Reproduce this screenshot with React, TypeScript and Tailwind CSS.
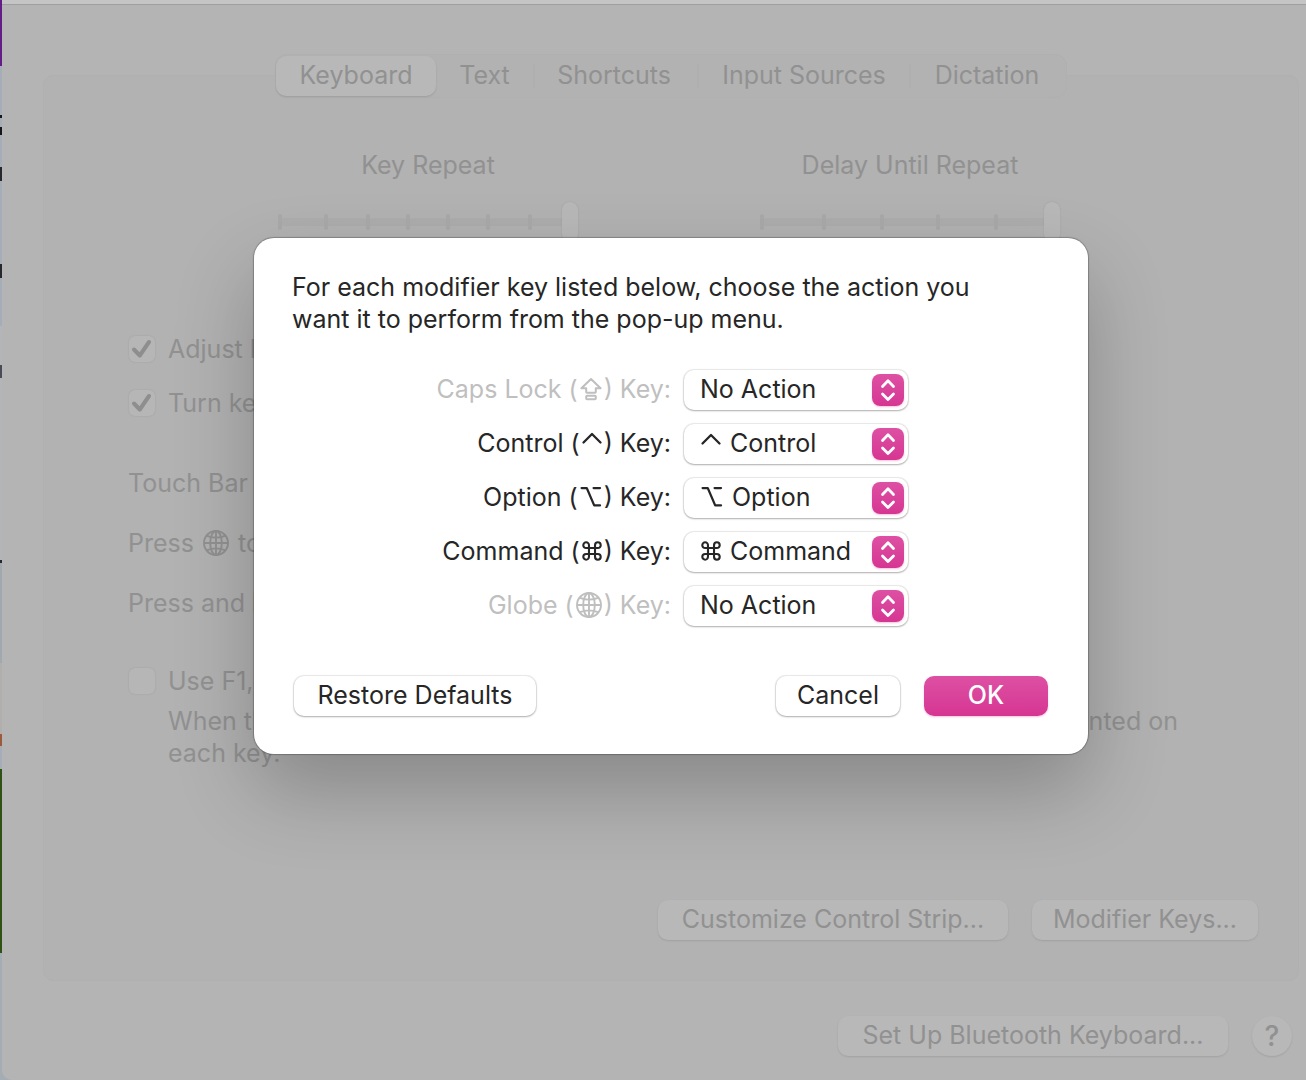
import React from "react";

type IconProps = { className?: string };

function CapsLockIcon({ className }: IconProps) {
  return (
    <svg viewBox="0 0 24 24" className={className} fill="none" stroke="currentColor" strokeWidth="2" strokeLinejoin="round" aria-hidden="true">
      <path d="M12 2 21.600 11.200h-4.800v3.800q0 .8-.8.8H8q-.8 0-.8-.8v-3.800H2.400Z" />
      <rect x="7.200" y="18.800" width="9.600" height="3.400" rx="1" />
    </svg>
  );
}

function ControlIcon({ className }: IconProps) {
  return (
    <svg viewBox="0 0 22 22" className={className} fill="none" stroke="currentColor" strokeWidth="2.300" strokeLinecap="round" strokeLinejoin="round" aria-hidden="true">
      <path d="M2.500 11.500 11 3l8.500 8.500" />
    </svg>
  );
}

function OptionIcon({ className }: IconProps) {
  return (
    <svg viewBox="0 0 24 24" className={className} fill="none" stroke="currentColor" strokeWidth="2.300" strokeLinecap="round" strokeLinejoin="round" aria-hidden="true">
      <path d="M2.600 3.100h5.200L15.200 20.400h5.800M14.600 3.100h6.400" />
    </svg>
  );
}

function CommandIcon({ className }: IconProps) {
  return (
    <svg viewBox="0 0 24 24" className={className} fill="none" stroke="currentColor" strokeWidth="2.300" aria-hidden="true">
      <path d="M8.700 5.600v12.800a3.100 3.100 0 1 1-3.100-3.100h12.800a3.100 3.100 0 1 1-3.100 3.100V5.600a3.100 3.100 0 1 1 3.100 3.100H5.600a3.100 3.100 0 1 1 3.100-3.100Z" />
    </svg>
  );
}

function GlobeIcon({ className }: IconProps) {
  return (
    <svg viewBox="0 0 26 26" className={className} fill="none" stroke="currentColor" strokeWidth="1.900" aria-hidden="true">
      <circle cx="13" cy="13" r="12" />
      <ellipse cx="13" cy="13" rx="5.800" ry="12" />
      <path d="M13 1v24M1 13h24M4 5.800q9 3.600 18 0M4 20.200q9-3.600 18 0" />
    </svg>
  );
}

function CheckIcon() {
  return (
    <svg viewBox="0 0 28 28" className="pointer-events-none absolute inset-0 size-7 text-[#8e8e8e]" fill="none" stroke="currentColor" strokeWidth="4" strokeLinecap="round" strokeLinejoin="round" aria-hidden="true">
      <path d="m6 14.500 5.800 6L21 7" />
    </svg>
  );
}

const edge: [string, string][] = [
  ["h-[66px]", "bg-[#641c86]"],
  ["h-[49px]", "bg-[#a4adb8]"],
  ["h-[3px]", "bg-[#15171a]"],
  ["h-[9px]", "bg-[#a4adb8]"],
  ["h-[8px]", "bg-[#15171a]"],
  ["h-[32px]", "bg-[#a4adb8]"],
  ["h-[14px]", "bg-[#26282c]"],
  ["h-[83px]", "bg-[#a4adb8]"],
  ["h-[14px]", "bg-[#26282c]"],
  ["h-[48px]", "bg-[#a4adb8]"],
  ["h-[39px]", "bg-[#b4b5b8]"],
  ["h-[13px]", "bg-[#474c55]"],
  ["h-[182px]", "bg-[#b4b5b8]"],
  ["h-[3px]", "bg-[#26282c]"],
  ["h-[100px]", "bg-[#a0a8b0]"],
  ["h-[71px]", "bg-[#b1aeac]"],
  ["h-[12px]", "bg-[#9c5a3c]"],
  ["h-[23px]", "bg-[#a4adb8]"],
  ["h-[184px]", "bg-[#2f5214]"],
  ["flex-1", "bg-[#a5adb4]"],
];

const tabs = [
  { label: "Text", width: "w-[97px]" },
  { label: "Shortcuts", width: "w-[164px] pr-1" },
  { label: "Input Sources", width: "w-[212px]" },
  { label: "Dictation", width: "w-[154px]" },
];

function TickSlider({ id, label, columns, ticks, max }: { id: string; label: string; columns: string; ticks: number; max: number }) {
  return (
    <div className="flex w-[300px] flex-col items-center">
      <label htmlFor={id} className="whitespace-nowrap">{label}</label>
      <div className="relative mt-[21px] h-10 w-full">
        <div className="absolute inset-x-0.5 top-4 h-2 rounded bg-[#adadad]" />
        <div className={`absolute inset-x-0 top-3 grid h-4 ${columns}`}>
          {Array.from({ length: ticks }, (_, i) => (
            <span key={i} className="h-4 w-1 rounded-full bg-[#a9a9a9]" />
          ))}
        </div>
        <input
          id={id}
          type="range"
          min={0}
          max={max}
          defaultValue={max}
          className="absolute inset-0 h-10 w-full appearance-none bg-transparent [&::-webkit-slider-thumb]:h-10 [&::-webkit-slider-thumb]:w-4 [&::-webkit-slider-thumb]:appearance-none [&::-webkit-slider-thumb]:rounded-full [&::-webkit-slider-thumb]:bg-[#b8b8b8] [&::-webkit-slider-thumb]:shadow-[0_0_2px_rgba(0,0,0,0.1)]"
        />
      </div>
    </div>
  );
}

function CheckRow({ id, label, checked }: { id: string; label: string; checked?: boolean }) {
  return (
    <div className="flex h-8 items-center gap-3">
      <span className="relative flex size-7 shrink-0 items-center justify-center">
        <input id={id} type="checkbox" defaultChecked={checked} className="block size-[26px] appearance-none rounded-md bg-[#b6b6b6] shadow-[0_0_2px_rgba(0,0,0,0.12)]" />
        {checked && <CheckIcon />}
      </span>
      <label htmlFor={id} className="whitespace-nowrap">{label}</label>
    </div>
  );
}

const dimButton = "h-10 whitespace-nowrap rounded-[10px] bg-[#b8b8b8] pb-0.5 text-center shadow-[0_1px_2px_rgba(0,0,0,0.1)]";
const lightControl = "h-10 whitespace-nowrap rounded-[10px] bg-white pb-0.5 shadow-[0_0_1px_1px_rgba(0,0,0,0.09),0_1px_2px_rgba(0,0,0,0.25)]";

type Modifier = {
  id: string;
  name: string;
  icon: React.ReactNode;
  dim?: boolean;
  value: string;
  valueIcon?: React.ReactNode;
  pad: string;
};

const modifiers: Modifier[] = [
  { id: "caps", name: "Caps Lock", icon: <CapsLockIcon className="mx-px inline size-6 align-[-3px]" />, dim: true, value: "No Action", pad: "pl-4" },
  { id: "control", name: "Control", icon: <ControlIcon className="mx-px inline size-[22px] align-[-1px]" />, value: "Control", valueIcon: <ControlIcon className="size-[22px]" />, pad: "pl-[46px]" },
  { id: "option", name: "Option", icon: <OptionIcon className="mx-px inline size-6 align-[-3px]" />, value: "Option", valueIcon: <OptionIcon className="size-6" />, pad: "pl-12" },
  { id: "command", name: "Command", icon: <CommandIcon className="mx-px inline size-[22px] align-[-2px]" />, value: "Command", valueIcon: <CommandIcon className="size-[22px]" />, pad: "pl-[46px]" },
  { id: "globe", name: "Globe", icon: <GlobeIcon className="mx-0.5 inline size-[26px] align-[-4px]" />, dim: true, value: "No Action", pad: "pl-4" },
];

function ModifierRow({ m }: { m: Modifier }) {
  return (
    <div className="flex h-10 items-center">
      <label htmlFor={m.id} className={`w-1/2 whitespace-nowrap pb-0.5 text-right ${m.dim ? "text-[#bfbfbf]" : ""}`}>
        {m.name} ({m.icon}) Key:
      </label>
      <div className="relative ml-[13px] w-[224px]">
        <select id={m.id} defaultValue={m.value} className={`block w-full appearance-none text-left ${lightControl} ${m.pad}`}>
          <option>{m.value}</option>
        </select>
        {m.valueIcon && <span className="pointer-events-none absolute inset-y-0 left-4 flex items-center pb-0.5">{m.valueIcon}</span>}
        <span className="pointer-events-none absolute right-1 top-1 flex size-8 items-center justify-center rounded-lg bg-linear-to-b from-[#dd50a4] to-[#d63592] shadow-[0_1px_2px_rgba(214,53,146,0.3)]">
          <svg viewBox="0 0 32 32" className="size-8" fill="none" stroke="white" strokeWidth="2.800" strokeLinecap="round" strokeLinejoin="round" aria-hidden="true">
            <path d="m10.500 12.400 5.500-5.600 5.500 5.600M10.500 19.900l5.500 5.600 5.500-5.600" />
          </svg>
        </span>
      </div>
    </div>
  );
}

function ModifierDialog() {
  return (
    <div
      role="dialog"
      aria-label="Modifier Keys"
      className="w-[834px] rounded-[20px] bg-white px-[38px] pb-[38px] pt-[33px] text-[#262626] shadow-[0_0_1px_1px_rgba(0,0,0,0.25),0_36px_80px_rgba(0,0,0,0.24)]"
    >
      <p>
        For each modifier key listed below, choose the action you
        <br />
        want it to perform from the pop-up menu.
      </p>
      <div className="mt-[35px] flex flex-col gap-3.5">
        {modifiers.map((m) => (
          <ModifierRow key={m.id} m={m} />
        ))}
      </div>
      <div className="mt-[50px] flex items-center px-0.5">
        <button type="button" className={`w-[242px] ${lightControl}`}>Restore Defaults</button>
        <button type="button" className={`ml-auto w-[124px] ${lightControl}`}>Cancel</button>
        <button type="button" className="ml-6 h-10 w-[124px] rounded-[10px] bg-linear-to-b from-[#dd50a4] to-[#d63592] pb-0.5 font-medium text-white shadow-[0_1px_2px_rgba(214,53,146,0.3)]">OK</button>
      </div>
    </div>
  );
}

export default function App() {
  return (
    <div className="flex min-h-screen overflow-hidden bg-[#a5adb4] font-['Inter',sans-serif] text-[25px] leading-8 text-[#919191]">
      <div className="flex w-0.5 shrink-0 flex-col">
        {edge.map(([h, c], i) => (
          <span key={i} className={`${h} ${c}`} />
        ))}
      </div>
      <div className="min-w-0 flex-1 rounded-bl-[10px] bg-[#b4b4b4]">
        <div className="h-[5px] border-b border-[#a0a0a0] bg-[#c5c5c5]" />
        <main className="pb-6 pl-[41px] pr-[7px] pt-[70px]">
          <section className="relative rounded-[10px] border border-[#b0b0b0] bg-[#b2b2b2] pb-10">
            <div role="tablist" className="mx-auto -mt-[22px] flex h-11 w-[792px] items-center rounded-xl border border-[#b0b0b0] bg-[#b2b2b2]">
              <button type="button" role="tab" aria-selected="true" className="h-10 w-40 rounded-[10px] bg-[#b8b8b8] pb-0.5 shadow-[0_1px_2px_rgba(0,0,0,0.12)]">Keyboard</button>
              {tabs.map((t, i) => (
                <button key={t.label} type="button" role="tab" aria-selected="false" className={`h-6 whitespace-nowrap pb-0.5 leading-[22px] ${t.width} ${i > 0 ? "border-l-2 border-[#afafaf]" : ""}`}>
                  {t.label}
                </button>
              ))}
            </div>
            <div className="mr-1 mt-[51px] flex justify-center gap-[182px]">
              <TickSlider id="repeat" label="Key Repeat" ticks={7} max={7} columns="grid-cols-[46px_42px_40px_40px_40px_42px_40px]" />
              <TickSlider id="delay" label="Delay Until Repeat" ticks={5} max={5} columns="grid-cols-[62px_58px_56px_58px_56px]" />
            </div>
            <div className="mt-[91px] pl-[84px]">
              <div className="flex flex-col gap-[22px]">
                <CheckRow id="brightness" label="Adjust keyboard" checked />
                <CheckRow id="backlight" label="Turn keyboard" checked />
              </div>
              <div className="mt-12 flex flex-col gap-7">
                <p>Touch Bar shows</p>
                <p>Press <GlobeIcon className="mx-0.5 inline size-[26px] align-[-4px]" /> to</p>
                <p>Press and hold</p>
              </div>
              <div className="mt-[46px]">
                <CheckRow id="fkeys" label="Use F1, F2" />
                <p className="mt-2 pl-10 pr-[120px]">
                  <span className="flex justify-between">
                    <span>When this</span>
                    <span>printed on</span>
                  </span>
                  each key.
                </p>
              </div>
            </div>
            <div className="mr-10 mt-[131px] flex justify-end gap-6">
              <button type="button" className={`w-[350px] ${dimButton}`}>Customize Control Strip...</button>
              <button type="button" className={`w-[226px] ${dimButton}`}>Modifier Keys...</button>
            </div>
            <div className="absolute inset-x-0 top-[162px] flex justify-center">
              <ModifierDialog />
            </div>
          </section>
          <div className="mr-[7px] mt-[35px] flex justify-end gap-6">
            <button type="button" className={`w-[390px] ${dimButton}`}>Set Up Bluetooth Keyboard...</button>
            <button type="button" aria-label="Help" className="size-10 rounded-full bg-[#b8b8b8] text-[28px] font-medium shadow-[0_1px_2px_rgba(0,0,0,0.1)]">?</button>
          </div>
        </main>
      </div>
    </div>
  );
}
